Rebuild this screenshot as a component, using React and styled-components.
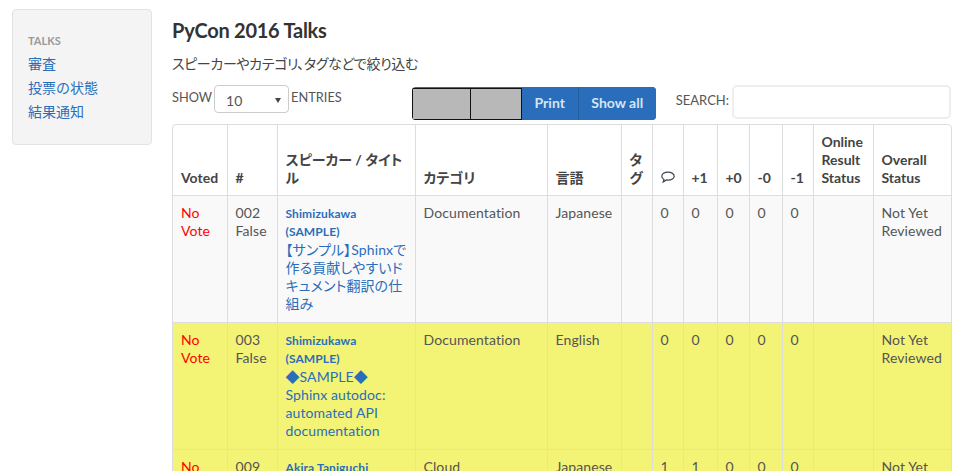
import React from 'react'
import styled, { createGlobalStyle } from 'styled-components'

const Global = createGlobalStyle`
  html, body { margin: 0; padding: 0; height: 471px; overflow: hidden; background: #fff; }
  body {
    font-family: Lato, "Noto Sans CJK JP", sans-serif;
    font-size: 14px;
    line-height: 18px;
    color: #555;
  }
`

const Page = styled.div`
  display: flex;
  align-items: flex-start;
  gap: 20px;
  padding: 9px 0 0 12px;
  width: 940px;
`
const Sidebar = styled.nav`
  box-sizing: border-box;
  flex: 0 0 140px;
  height: 136px;
  padding: 22px 15px 0;
  background: #f4f4f4;
  border: 1px solid #e3e3e3;
  border-radius: 4px;
`
const NavHead = styled.div`
  font-size: 11px;
  font-weight: 700;
  color: #999;
  line-height: 17px;
  margin-bottom: 3px;
`
const NavLink = styled.a`
  display: block;
  color: #2a6ebb;
  line-height: 24px;
`
const Main = styled.main`
  flex: 0 0 780px;
  min-width: 0;
`
const Title = styled.h1`
  margin: 9px 0 11px;
  font-size: 20px;
  line-height: 25px;
  font-weight: 700;
  letter-spacing: -0.25px;
  color: #333;
`
const Lead = styled.p`
  margin: 0 0 11px;
  line-height: 20px;
  color: #444;
  letter-spacing: -0.35px;
  font-feature-settings: "palt";
`
const Toolbar = styled.div`
  display: flex;
  align-items: flex-start;
  height: 36px;
  margin-bottom: 3px;
`
const FieldLabel = styled.label`
  display: flex;
  align-items: flex-start;
  gap: 2px;
  font-size: 12.8px;
  line-height: 24px;
  color: #555;
`
const Select = styled.div`
  box-sizing: border-box;
  position: relative;
  width: 75px;
  height: 28px;
  padding: 0 11px;
  font-size: 14px;
  line-height: 29px;
  border: 1px solid #ccc;
  border-radius: 4px;
  background: #fff;
  &::after {
    content: '';
    position: absolute;
    right: 7px;
    top: 12px;
    border-left: 3px solid transparent;
    border-right: 3px solid transparent;
    border-top: 5px solid #444;
  }
`
const ButtonGroup = styled.div`
  display: flex;
  height: 33px;
  margin: 2px 0 0 70px;
  background: #2a6ebb;
  border-radius: 4px;
  overflow: hidden;
`
const BlankButton = styled.div`
  box-sizing: border-box;
  height: 32px;
  margin-top: 1px;
  width: ${p => p.$w}px;
  background: #b8b8b8;
  border: 1px solid #111;
  & + & { border-left: 0; }
`
const Button = styled.div`
  box-sizing: border-box;
  width: ${p => p.$w}px;
  text-align: center;
  line-height: 32px;
  font-size: 14px;
  font-weight: 700;
  color: #d6e4f3;
  background: #2a6ebb;
  & + & { border-left: 1px solid #245f9f; }
`
const SearchLabel = styled(FieldLabel)`
  margin-left: 20px;
  gap: 3px;
  font-size: 13px;
  line-height: 30px;
`
const SearchInput = styled.div`
  box-sizing: border-box;
  width: 219px;
  height: 34px;
  background: #fff;
  border: 2px solid #eeeeee;
  border-radius: 5px;
`
const TableWrap = styled.div`
  width: 780px;
  border: 1px solid #ddd;
  border-radius: 4px;
  box-sizing: border-box;
`
const Table = styled.table`
  width: 778px;
  table-layout: fixed;
  border-collapse: collapse;
  font-feature-settings: "palt";
`
const Th = styled.th`
  padding: 8px;
  vertical-align: bottom;
  text-align: left;
  font-size: 14px;
  line-height: 18px;
  font-weight: 700;
  color: #444;
  border-left: 1px solid #ddd;
  border-bottom: 1px solid #ddd;
  &:first-child { border-left: 0; }
`
const Row = styled.tr`
  background: ${p => (p.$flagged ? '#f3f376' : '#f9f9f9')};
`
const Td = styled.td`
  padding: 8px;
  vertical-align: top;
  border-left: 1px solid #ddd;
  border-bottom: 1px solid #ddd;
  color: #555;
  line-height: 18px;
  letter-spacing: 0.1px;
  &:first-child { border-left: 0; }
`
const NoVote = styled.span`
  color: #f00;
`
const Speaker = styled.a`
  display: block;
  color: #2a6ebb;
  font-size: 12px;
  font-weight: 700;
  line-height: 18px;
  padding-top: 1px;
`
const TalkLink = styled.a`
  display: block;
  color: #2a6ebb;
  padding-bottom: 1px;
`

const CommentIcon = () => (
  <svg width="14" height="12" viewBox="0 0 14 12" fill="none" stroke="#3c4650" strokeWidth="1.2" style={{ display: 'block', marginBottom: 4 }}>
    <path d="M7 1.200C3.500 1.200.8 2.900.8 5.300c0 1.500.9 2.600 2.200 3.200L2.200 11l3.200-2.100c.5.100 1 .2 1.600.2 3.500 0 6.200-1.700 6.200-3.900S10.500 1.200 7 1.200Z" />
  </svg>
)

const columns = [54, 50, 138, 132, 74, 31, 31, 34, 32, 33, 31, 60, 78]
const Col = styled.col`
  width: ${p => p.$w}px;
`

const rows = [
  {
    id: '002', speaker: 'Shimizukawa', title: <>【サンプル】Sphinxで作る貢献しやすいドキュメント翻訳の仕組み</>,
    cat: 'Documentation', lang: 'Japanese', counts: [0, 0, 0, 0, 0],
  },
  {
    id: '003', speaker: 'Shimizukawa', flagged: true, title: <>◆SAMPLE◆<br />Sphinx autodoc: automated API documentation</>,
    cat: 'Documentation', lang: 'English', counts: [0, 0, 0, 0, 0],
  },
  {
    id: '009', speaker: 'Akira Taniguchi', flagged: true, noSample: true, title: 'Sphinx',
    cat: 'Cloud', lang: 'Japanese', counts: [1, 1, 0, 0, 0],
  },
]

const App = () => {
  return (
    <>
      <Global />
      <Page>
        <Sidebar>
          <NavHead>TALKS</NavHead>
          <NavLink>審査</NavLink>
          <NavLink>投票の状態</NavLink>
          <NavLink>結果通知</NavLink>
        </Sidebar>
        <Main>
          <Title>PyCon 2016 Talks</Title>
          <Lead>スピーカーやカテゴリ、タグなどで絞り込む</Lead>
          <Toolbar>
            <FieldLabel>
              SHOW <Select>10</Select> ENTRIES
            </FieldLabel>
            <ButtonGroup>
              <BlankButton $w={59} />
              <BlankButton $w={51} />
              <Button $w={56}>Print</Button>
              <Button $w={78}>Show all</Button>
            </ButtonGroup>
            <SearchLabel>
              SEARCH: <SearchInput />
            </SearchLabel>
          </Toolbar>
          <TableWrap>
            <Table>
              <colgroup>
                {columns.map((w, i) => <Col key={i} $w={w} />)}
              </colgroup>
              <thead>
                <tr>
                  <Th>Voted</Th>
                  <Th>#</Th>
                  <Th>スピーカー / タイトル</Th>
                  <Th>カテゴリ</Th>
                  <Th>言語</Th>
                  <Th>タグ</Th>
                  <Th><CommentIcon /></Th>
                  <Th>+1</Th>
                  <Th>+0</Th>
                  <Th>-0</Th>
                  <Th>-1</Th>
                  <Th>Online Result Status</Th>
                  <Th>Overall Status</Th>
                </tr>
              </thead>
              <tbody>
                {rows.map(r => (
                  <Row key={r.id} $flagged={r.flagged}>
                    <Td><NoVote>No Vote</NoVote></Td>
                    <Td>{r.id} False</Td>
                    <Td>
                      <Speaker>{r.speaker}{!r.noSample && <><br />(SAMPLE)</>}</Speaker>
                      <TalkLink>{r.title}</TalkLink>
                    </Td>
                    <Td>{r.cat}</Td>
                    <Td>{r.lang}</Td>
                    <Td />
                    {r.counts.map((c, i) => <Td key={i}>{c}</Td>)}
                    <Td />
                    <Td>Not Yet Reviewed</Td>
                  </Row>
                ))}
              </tbody>
            </Table>
          </TableWrap>
        </Main>
      </Page>
    </>
  )
}

export default App
